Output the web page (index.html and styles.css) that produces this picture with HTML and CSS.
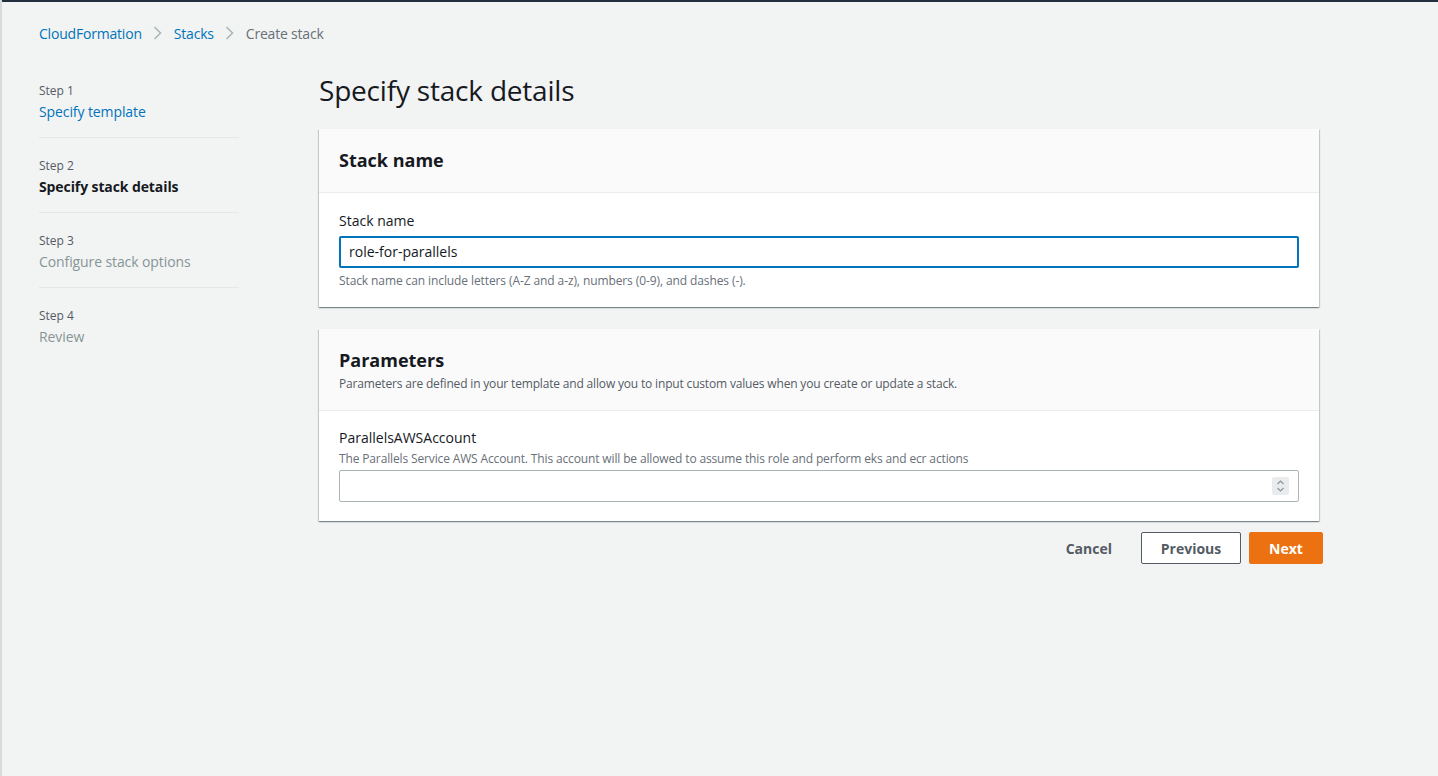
FILE: index.html
```html
<!DOCTYPE html>
<html>
<head>
<meta charset="utf-8">
<link rel="stylesheet" href="styles.css">
</head>
<body>
<div class="topbar"></div>
<div class="page">
  <nav class="crumbs">
    <a class="crumb-link">CloudFormation</a>
    <svg class="chev" viewBox="0 0 10 14" width="10" height="14"><path d="M1.5 1l6 6-6 6" fill="none" stroke="#aab7b8" stroke-width="1.6"/></svg>
    <a class="crumb-link">Stacks</a>
    <svg class="chev" viewBox="0 0 10 14" width="10" height="14"><path d="M1.5 1l6 6-6 6" fill="none" stroke="#aab7b8" stroke-width="1.6"/></svg>
    <span class="crumb-current">Create stack</span>
  </nav>
  <div class="layout">
    <aside class="steps">
      <div class="step">
        <div class="step-num">Step 1</div>
        <div class="step-title link">Specify template</div>
      </div>
      <div class="step">
        <div class="step-num">Step 2</div>
        <div class="step-title active">Specify stack details</div>
      </div>
      <div class="step">
        <div class="step-num">Step 3</div>
        <div class="step-title disabled">Configure stack options</div>
      </div>
      <div class="step last">
        <div class="step-num">Step 4</div>
        <div class="step-title disabled">Review</div>
      </div>
    </aside>
    <main class="main">
      <h1 class="title">Specify stack details</h1>
      <section class="panel">
        <div class="panel-head">
          <h2 class="panel-title">Stack name</h2>
        </div>
        <div class="panel-body">
          <div class="label">Stack name</div>
          <div class="input focused">role-for-parallels</div>
          <div class="hint">Stack name can include letters (A-Z and a-z), numbers (0-9), and dashes (-).</div>
        </div>
      </section>
      <section class="panel">
        <div class="panel-head params">
          <h2 class="panel-title">Parameters</h2>
          <div class="panel-desc">Parameters are defined in your template and allow you to input custom values when you create or update a stack.</div>
        </div>
        <div class="panel-body params-body">
          <div class="label">ParallelsAWSAccount</div>
          <div class="desc">The Parallels Service AWS Account. This account will be allowed to assume this role and perform eks and ecr actions</div>
          <div class="input number">
            <span class="spinner">
              <svg viewBox="0 0 17 18" width="17" height="18"><path d="M5.5 7l3-3 3 3M5.5 11l3 3 3-3" fill="none" stroke="#879596" stroke-width="1.1"/></svg>
            </span>
          </div>
        </div>
      </section>
      <div class="actions">
        <button class="btn btn-link">Cancel</button>
        <button class="btn btn-normal">Previous</button>
        <button class="btn btn-primary">Next</button>
      </div>
    </main>
  </div>
</div>
</body>
</html>
```
FILE: styles.css
```css
html, body {
  margin: 0;
  padding: 0;
  background: #f2f3f3;
  font-family: "Open Sans", "Noto Sans", sans-serif;
  color: #16191f;
}
body {
  height: 776px;
  border-left: 2px solid #d5dbdb;
  box-sizing: border-box;
  overflow: hidden;
}
.topbar {
  height: 2px;
  background: #232f3e;
}
.page {
  padding: 0 0 0 37px;
}
.crumbs {
  display: flex;
  align-items: center;
  height: 62px;
  font-size: 14px;
  gap: 11px;
  letter-spacing: -0.2px;
}
.crumb-link {
  color: #0073bb;
}
.crumb-current {
  color: #687078;
}
.chev {
  display: block;
}
.layout {
  display: flex;
  align-items: flex-start;
}
.steps {
  width: 200px;
  flex: none;
  padding-top: 17px;
}
.step {
  border-bottom: 1px solid #e4e7e8;
  padding-bottom: 14px;
  margin-bottom: 18px;
}
.step.last {
  border-bottom: none;
}
.step-num {
  font-size: 12px;
  color: #545b64;
  line-height: 20px;
}
.step-title {
  font-size: 14px;
  line-height: 22px;
  letter-spacing: -0.1px;
}
.step-title.link { color: #0073bb; }
.step-title.active { font-weight: 700; color: #16191f; }
.step-title.disabled { color: #879596; }
.main {
  margin-left: 80px;
  width: 1000px;
}
.title {
  font-size: 28px;
  font-weight: 400;
  margin: 6px 0 0 0;
  line-height: 40px;
  height: 59px;
  letter-spacing: -0.2px;
}
.panel {
  background: #fff;
  box-shadow: 0 1px 1px 0 rgba(0,28,36,0.3), 1px 1px 1px 0 rgba(0,28,36,0.15), -1px 1px 1px 0 rgba(0,28,36,0.15);
  margin-bottom: 22px;
}
.panel-head {
  background: #fafafa;
  border-bottom: 1px solid #eaeded;
  height: 64px;
  box-sizing: border-box;
  padding: 19px 20px 0;
}
.panel-head.params {
  height: 82px;
}
.panel-title {
  margin: 0;
  font-size: 18px;
  font-weight: 700;
  line-height: 24px;
}
.panel-desc {
  font-size: 12px;
  color: #545b64;
  line-height: 16px;
  margin-top: 4px;
  letter-spacing: -0.17px;
}
.panel-body {
  padding: 18px 20px 18px;
}
.label {
  font-size: 14px;
  line-height: 20px;
}
.input {
  height: 32px;
  box-sizing: border-box;
  border: 1px solid #aab7b8;
  border-radius: 2px;
  margin-top: 5px;
  font-size: 14px;
  line-height: 30px;
  padding: 0 8px;
  background: #fff;
  position: relative;
}
.input.focused {
  border: 2px solid #0073bb;
  line-height: 28px;
}
.hint {
  font-size: 12px;
  color: #687078;
  margin-top: 5px;
  line-height: 16px;
  letter-spacing: -0.1px;
}
.params-body {
  padding-top: 17px;
  padding-bottom: 19px;
}
.desc {
  font-size: 12px;
  color: #687078;
  line-height: 16px;
  margin-top: 3px;
  letter-spacing: -0.14px;
}
.input.number {
  margin-top: 3px;
  width: 960px;
}
.spinner {
  position: absolute;
  right: 9px;
  top: 6px;
  width: 17px;
  height: 18px;
  background: #e9ebed;
  border-radius: 2px;
}
.spinner svg { display: block; }
.actions {
  display: flex;
  justify-content: flex-end;
  align-items: center;
  gap: 8px;
  margin-top: -11px;
  margin-right: -4px;
}
.btn {
  font-family: inherit;
  font-size: 14px;
  font-weight: 700;
  height: 32px;
  border-radius: 2px;
  cursor: pointer;
  box-sizing: border-box;
}
.btn-link {
  background: transparent;
  border: 1px solid transparent;
  color: #545b64;
  padding: 0 20px;
  margin-right: 0;
}
.btn-normal {
  background: #fff;
  border: 1px solid #545b64;
  color: #545b64;
  width: 100px;
}
.btn-primary {
  background: #ec7211;
  border: 1px solid #ec7211;
  color: #fff;
  width: 74px;
}
```
